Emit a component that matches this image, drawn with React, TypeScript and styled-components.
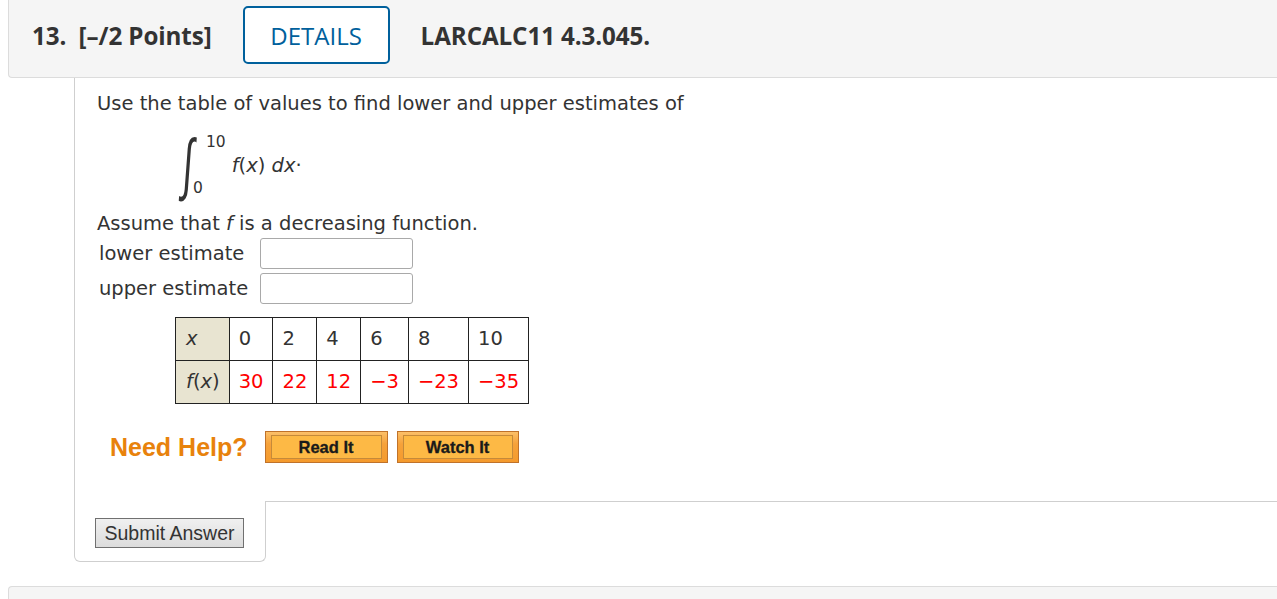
import React from "react";
import styled, { createGlobalStyle } from "styled-components";

const Global = createGlobalStyle`
  html, body { margin: 0; padding: 0; background: #fff; }
  body { font-family: "DejaVu Sans", Verdana, sans-serif; color: #333; }
  * { box-sizing: border-box; }
`;

const Page = styled.div`
  padding-left: 8px;
`;

const QuestionHeader = styled.div<{ $bottom?: boolean }>`
  display: flex;
  align-items: center;
  gap: 31px;
  background: #f5f5f5;
  border-left: 1px solid #dcdcdc;
  ${(p) =>
    p.$bottom
      ? `border-top: 1px solid #dcdcdc; border-top-left-radius: 4px; height: 20px; margin-top: 24px;`
      : `border-bottom: 1px solid #dcdcdc; border-bottom-left-radius: 4px; padding: 6px 0 13px 23px;`}
  font-family: "Open Sans", "DejaVu Sans", sans-serif;
  font-size: 24.2px;
  color: #333;
`;

const HeadText = styled.span`
  font-weight: 700;
  letter-spacing: -0.1px;
  white-space: pre;
`;

const DetailsButton = styled.button`
  width: 147px;
  height: 58px;
  border: 2px solid #00609c;
  border-radius: 5px;
  background: #fff;
  color: #00609c;
  font-family: "Open Sans", "DejaVu Sans", sans-serif;
  font-size: 24px;
  font-weight: 400;
  padding: 0;
`;

const Panel = styled.div`
  margin-left: 66px;
`;

const Content = styled.div`
  border-left: 1px solid #cfcfcf;
  padding: 14px 0 38px 22px;
  font-size: 19.5px;
  line-height: 24px;
  color: #333;
`;

const Para = styled.p`
  margin: 0;
`;

const Integral = styled.div`
  display: flex;
  height: 58px;
  margin: 20px 0 18px 85px;
`;

const Sign = styled.span`
  display: inline-block;
  font-family: "DejaVu Sans", sans-serif;
  font-weight: 200;
  font-size: 40px;
  line-height: 58px;
  height: 58px;
  width: 19px;
  transform: scale(0.9, 1.7) skewX(-8deg);
  transform-origin: 50% 54%;
  color: #333;
`;

const Limits = styled.div`
  display: flex;
  flex-direction: column;
  justify-content: space-between;
  font-size: 15.5px;
  line-height: 16px;
  height: 58px;
  margin-left: -8px;
`;

const Upper = styled.span`
  margin-left: 13px;
  margin-top: -2px;
`;

const Lower = styled.span`
  margin-bottom: -2px;
`;

const Integrand = styled.span`
  align-self: center;
  font-style: italic;
  margin-left: 6px;
  margin-top: 2px;
`;

const Ital = styled.i`
  font-style: italic;
`;

const AnswerGrid = styled.div`
  display: grid;
  grid-template-columns: 161px 153px;
  row-gap: 4px;
  align-items: center;
  margin: 2px 0 0 2px;
`;

const Label = styled.span`
  line-height: 31px;
`;

const AnswerInput = styled.input`
  width: 153px;
  height: 31px;
  border: 1px solid #a9a9a9;
  border-radius: 3px;
  background: #fff;
  margin: 0;
`;

const ValueTable = styled.table`
  border-collapse: collapse;
  margin: 13px 0 0 78px;
  font-size: 19.5px;
`;

const Cell = styled.td<{ $head?: boolean; $red?: boolean }>`
  border: 1px solid #222;
  height: 43px;
  padding: 0 9px 0 9px;
  text-align: left;
  white-space: nowrap;
  background: ${(p) => (p.$head ? "#e8e4d1" : "#fff")};
  color: ${(p) => (p.$red ? "#ff0000" : "#333")};
  ${(p) => (p.$head ? "font-style: italic; padding-left: 10px;" : "")}
`;

const Upright = styled.span`
  font-style: normal;
`;

const HelpRow = styled.div`
  display: flex;
  align-items: center;
  margin: 27px 0 0 13px;
`;

const NeedHelp = styled.span`
  font-family: "Liberation Sans", Arial, sans-serif;
  font-weight: 700;
  font-size: 25px;
  color: #e8820c;
  margin-right: 17px;
`;

const HelpButton = styled.button<{ $w: number }>`
  width: ${(p) => p.$w}px;
  height: 32px;
  margin-right: 9px;
  padding: 3px 5px;
  border: 1px solid #c0722a;
  background: linear-gradient(#fcc069, #f6a23a 40%, #f49a2c);
  display: flex;
  cursor: pointer;
`;

const HelpInner = styled.span`
  flex: 1;
  border: 1px solid #c58a3a;
  background: #fdb945;
  font-family: "Liberation Sans", Arial, sans-serif;
  font-weight: 700;
  font-size: 16.5px;
  line-height: 22px;
  color: #1a1a1a;
  text-align: center;
  -webkit-text-stroke: 0.3px #1a1a1a;
`;

const Footer = styled.div`
  display: flex;
`;

const SubmitCell = styled.div`
  width: 192px;
  border-left: 1px solid #cfcfcf;
  border-right: 1px solid #cfcfcf;
  border-bottom: 1px solid #cfcfcf;
  border-bottom-left-radius: 6px;
  border-bottom-right-radius: 6px;
  padding: 17px 0 13px 20px;
`;

const FooterRest = styled.div`
  flex: 1;
  border-top: 1px solid #cfcfcf;
`;

const SubmitButton = styled.button`
  width: 149px;
  height: 30px;
  border: 1px solid #707070;
  background: linear-gradient(#f0f0f0, #dcdcdc);
  font-family: "Liberation Sans", Arial, sans-serif;
  font-size: 19.5px;
  color: #333;
  padding: 0;
  display: block;
`;

const xs = ["0", "2", "4", "6", "8", "10"];
const fx = ["30", "22", "12", "\u22123", "\u221223", "\u221235"];

export default function App() {
  return (
    <Page>
      <Global />
      <QuestionHeader>
        <HeadText>13.  [–/2 Points]</HeadText>
        <DetailsButton>DETAILS</DetailsButton>
        <HeadText>LARCALC11 4.3.045.</HeadText>
      </QuestionHeader>
      <Panel>
        <Content>
          <Para>Use the table of values to find lower and upper estimates of</Para>
          <Integral>
            <Sign>∫</Sign>
            <Limits>
              <Upper>10</Upper>
              <Lower>0</Lower>
            </Limits>
            <Integrand>
              f<Upright>(</Upright>x<Upright>)</Upright> dx<Upright>·</Upright>
            </Integrand>
          </Integral>
          <Para>
            Assume that <Ital>f</Ital> is a decreasing function.
          </Para>
          <AnswerGrid>
            <Label>lower estimate</Label>
            <AnswerInput type="text" />
            <Label>upper estimate</Label>
            <AnswerInput type="text" />
          </AnswerGrid>
          <ValueTable>
            <tbody>
              <tr>
                <Cell $head>x</Cell>
                {xs.map((v) => (
                  <Cell key={v}>{v}</Cell>
                ))}
              </tr>
              <tr>
                <Cell $head>
                  f<Upright>(</Upright>x<Upright>)</Upright>
                </Cell>
                {fx.map((v) => (
                  <Cell key={v} $red>
                    {v}
                  </Cell>
                ))}
              </tr>
            </tbody>
          </ValueTable>
          <HelpRow>
            <NeedHelp>Need Help?</NeedHelp>
            <HelpButton $w={123}>
              <HelpInner>Read It</HelpInner>
            </HelpButton>
            <HelpButton $w={122}>
              <HelpInner>Watch It</HelpInner>
            </HelpButton>
          </HelpRow>
        </Content>
        <Footer>
          <SubmitCell>
            <SubmitButton>Submit Answer</SubmitButton>
          </SubmitCell>
          <FooterRest />
        </Footer>
      </Panel>
      <QuestionHeader $bottom />
    </Page>
  );
}
